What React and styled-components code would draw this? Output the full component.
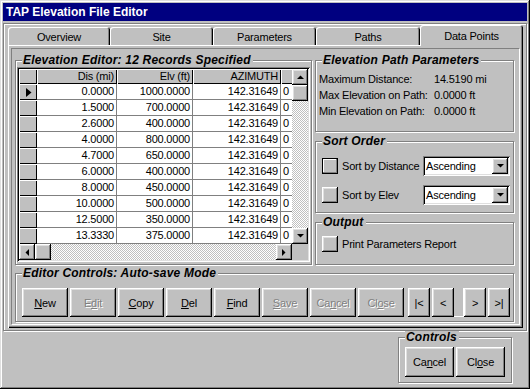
import React from 'react';
import styled, { createGlobalStyle, css } from 'styled-components';

const GlobalStyle = createGlobalStyle`
  html, body { margin: 0; padding: 0; background: #c0c0c0; }
  body {
    font-family: "Liberation Sans", Arial, sans-serif;
    font-size: 11px;
    letter-spacing: -0.2px;
    color: #000;
  }
  * { box-sizing: border-box; }
`;

const raised = css`
  box-shadow: inset -1px -1px #000, inset 1px 1px #fff, inset -2px -2px #808080, inset 2px 2px #dfdfdf;
`;
const sunken = css`
  box-shadow: inset 1px 1px #808080, inset -1px -1px #fff, inset 2px 2px #000, inset -2px -2px #dfdfdf;
`;
const dither = css`
  background-image: repeating-conic-gradient(#c0c0c0 0% 25%, #fff 0% 50%);
  background-size: 2px 2px;
`;

const Window = styled.div`
  width: 530px;
  height: 389px;
  background: #c0c0c0;
  padding: 3px;
  display: flex;
  flex-direction: column;
  box-shadow: inset -1px -1px #000, inset 1px 1px #dfdfdf, inset -2px -2px #808080, inset 2px 2px #fff;
`;

const TitleBar = styled.div`
  height: 18px;
  background: #000080;
  color: #fff;
  font-weight: bold;
  font-size: 12px;
  letter-spacing: 0;
  line-height: 18px;
  padding-left: 3px;
`;

const Frame = styled.div`
  margin-top: 2px;
  height: 308px;
  border: 1px solid #808080;
  box-shadow: inset 1px 1px #fff, 1px 1px #fff;
  padding: 1px 3px 2px 4px;
  display: flex;
  flex-direction: column;
`;

const TabRow = styled.div`
  display: flex;
  height: 20px;
  align-items: flex-end;
  position: relative;
  z-index: 1;
`;

const Tab = styled.div`
  flex: ${(p) => p.$w} 0 0;
  height: ${(p) => (p.$active ? '21px' : '18px')};
  margin-bottom: ${(p) => (p.$active ? '-1px' : '0')};
  background: #c0c0c0;
  border-radius: 3px 3px 0 0;
  box-shadow: inset 1px 1px #fff, inset -1px 0 #000, inset -2px 0 #808080;
  display: flex;
  align-items: center;
  justify-content: center;
  padding-top: ${(p) => (p.$active ? '0' : '1px')};
`;

const Panel = styled.div`
  flex: 1;
  padding: 3px;
  box-shadow: inset 1px 1px #fff, inset -1px -1px #000, inset -2px -2px #808080;
  display: flex;
`;

const InnerBox = styled.div`
  flex: 1;
  border: 1px solid;
  border-color: #808080 #fff #fff #808080;
  padding: 5px 5px 2px 3px;
  display: grid;
  grid-template-columns: 297px 1fr;
  grid-template-rows: 211px auto;
  column-gap: 3px;
  row-gap: 2px;
`;

const Group = styled.fieldset`
  margin: 0;
  padding: 0;
  min-width: 0;
  border: 1px solid #808080;
  box-shadow: inset 1px 1px #fff, 1px 1px #fff;
  ${(p) => p.$h && `height: ${p.$h}px;`}
  ${(p) => p.$span && 'grid-column: 1 / -1;'}
`;

const Legend = styled.legend`
  margin-left: 6px;
  padding: 0 2px 0 1px;
  font-weight: bold;
  font-style: italic;
  font-size: 12px;
  letter-spacing: 0.2px;
  line-height: 12px;
  background: #c0c0c0;
`;

const GroupBody = styled.div`
  padding: ${(p) => p.$pad};
`;

const RightCol = styled.div`
  display: flex;
  flex-direction: column;
  gap: 3px;
`;

/* ---------- Data grid ---------- */
const DataGrid = styled.div`
  width: 293px;
  height: 195px;
  padding: 2px;
  ${sunken}
  display: grid;
  grid-template-columns: 273px 16px;
  grid-template-rows: 175px 16px;
`;

const Table = styled.div`
  overflow: hidden;
  background: #fff;
`;

const GridRow = styled.div`
  display: grid;
  grid-template-columns: 18px 80px 76px 88px 40px;
  height: ${(p) => (p.$head ? '15px' : '16px')};
`;

const HeadCell = styled.div`
  background: #c0c0c0;
  box-shadow: inset 1px 1px #fff, inset -1px -1px #000;
  text-align: right;
  padding-right: 3px;
  line-height: 15px;
  white-space: nowrap;
  overflow: hidden;
`;

const RowHead = styled.div`
  background: #c0c0c0;
  box-shadow: inset 1px 1px #fff, inset -1px -1px #000;
  display: flex;
  align-items: center;
  padding-left: 7px;
`;

const Cell = styled.div`
  border-right: 1px solid #808080;
  border-bottom: 1px solid #808080;
  text-align: ${(p) => (p.$left ? 'left' : 'right')};
  padding: ${(p) => (p.$left ? '0 0 0 2px' : '0 2px 0 0')};
  line-height: 15px;
  white-space: nowrap;
  overflow: hidden;
`;

const VScroll = styled.div`
  display: flex;
  flex-direction: column;
  ${dither}
`;

const HScroll = styled.div`
  display: flex;
  ${dither}
`;

const Track = styled.div`
  flex: 1;
`;

const SBtn = styled.div`
  width: 16px;
  height: 16px;
  flex: none;
  background: #c0c0c0;
  ${raised}
  display: flex;
  align-items: center;
  justify-content: center;
`;

const Corner = styled.div`
  background: #c0c0c0;
`;

/* ---------- Buttons ---------- */
const Btn = styled.button`
  width: ${(p) => p.$w}px;
  height: ${(p) => p.$h || 29}px;
  margin: 0;
  padding: 0;
  border: none;
  background: #c0c0c0;
  font: inherit;
  font-size: 11px;
  letter-spacing: -0.2px;
  color: ${(p) => (p.disabled ? '#808080' : '#000')};
  text-shadow: ${(p) => (p.disabled ? '1px 1px #fff' : 'none')};
  ${raised}
  flex: none;
`;

const BtnRow = styled.div`
  display: flex;
  gap: 2px;
`;

const NavGap = styled.div`
  width: 1px;
`;

const Slot = styled.div`
  width: 10px;
  height: 29px;
  flex: none;
  margin: 0 -2px;
  box-shadow: inset 0 -1px #fff, inset -1px 0 #fff;
`;

/* ---------- Right side ---------- */
const InfoRow = styled.div`
  display: grid;
  grid-template-columns: 115px 1fr;
  line-height: 16px;
  white-space: nowrap;
`;

const OptRow = styled.div`
  display: flex;
  align-items: center;
  height: 20px;
`;

const Toggle = styled.div`
  width: 16px;
  height: 16px;
  flex: none;
  background: #c0c0c0;
  ${(p) =>
    p.$focus
      ? 'box-shadow: inset 0 0 0 1px #000, inset -2px -2px #808080, inset 2px 2px #fff;'
      : 'box-shadow: inset -1px -1px #000, inset 1px 1px #fff, inset -2px -2px #808080, inset 2px 2px #dfdfdf;'}
`;

const OptLabel = styled.div`
  width: ${(p) => p.$w}px;
  padding-left: 4px;
  white-space: nowrap;
`;

const Combo = styled.div`
  width: 87px;
  height: 20px;
  padding: 2px;
  background: #fff;
  ${sunken}
  display: flex;
  align-items: center;
`;

const ComboText = styled.span`
  flex: 1;
  padding-left: 1px;
`;

const OptStack = styled.div`
  display: flex;
  flex-direction: column;
  gap: 9px;
`;

/* ---------- Bottom ---------- */
const Bottom = styled.div`
  flex: 1;
  display: flex;
  justify-content: flex-end;
  padding-right: 15px;
`;

const Arrow = ({ dir }) => {
  const pts = {
    up: '0,4 7,4 3.5,0.5',
    down: '0,0 7,0 3.5,3.5',
    left: '4,0 4,7 0.5,3.5',
    right: '0,0 0,7 3.5,3.5',
  }[dir];
  const vertical = dir === 'up' || dir === 'down';
  return (
    <svg width={vertical ? 7 : 4} height={vertical ? 4 : 7} viewBox={vertical ? '0 0 7 4' : '0 0 4 7'}>
      <polygon points={pts} fill="#000" />
    </svg>
  );
};

const RowPointer = () => (
  <svg width="6" height="9" viewBox="0 0 6 9">
    <polygon points="0,0 5.5,4.5 0,9" fill="#000" />
  </svg>
);

const rows = [
  ['0.0000', '1000.0000'],
  ['1.5000', '700.0000'],
  ['2.6000', '400.0000'],
  ['4.0000', '800.0000'],
  ['4.7000', '650.0000'],
  ['6.0000', '400.0000'],
  ['8.0000', '450.0000'],
  ['10.0000', '500.0000'],
  ['12.5000', '350.0000'],
  ['13.3330', '375.0000'],
];

const tabs = [
  ['Overview', 102],
  ['Site', 103],
  ['Parameters', 103],
  ['Paths', 104],
  ['Data Points', 103],
];

const Acc = ({ text, at }) => (
  <>
    {text.slice(0, at)}
    <u>{text[at]}</u>
    {text.slice(at + 1)}
  </>
);

export default function App() {
  return (
    <>
      <GlobalStyle />
      <Window>
        <TitleBar>TAP Elevation File Editor</TitleBar>
        <Frame>
          <TabRow>
            {tabs.map(([t, w]) => (
              <Tab key={t} $w={w} $active={t === 'Data Points'}>
                {t}
              </Tab>
            ))}
          </TabRow>
          <Panel>
            <InnerBox>
              <Group>
                <Legend>Elevation Editor: 12 Records Specified</Legend>
                <GroupBody $pad="1px 0 0 1px">
                  <DataGrid>
                    <Table>
                      <GridRow $head>
                        <HeadCell />
                        <HeadCell>Dis (mi)</HeadCell>
                        <HeadCell>Elv (ft)</HeadCell>
                        <HeadCell>AZIMUTH</HeadCell>
                        <HeadCell />
                      </GridRow>
                      {rows.map(([d, e], i) => (
                        <GridRow key={i}>
                          <RowHead>{i === 0 && <RowPointer />}</RowHead>
                          <Cell>{d}</Cell>
                          <Cell>{e}</Cell>
                          <Cell>142.31649</Cell>
                          <Cell $left>0</Cell>
                        </GridRow>
                      ))}
                    </Table>
                    <VScroll>
                      <SBtn>
                        <Arrow dir="up" />
                      </SBtn>
                      <SBtn />
                      <Track />
                      <SBtn>
                        <Arrow dir="down" />
                      </SBtn>
                    </VScroll>
                    <HScroll>
                      <SBtn>
                        <Arrow dir="left" />
                      </SBtn>
                      <SBtn />
                      <Track />
                      <SBtn>
                        <Arrow dir="right" />
                      </SBtn>
                    </HScroll>
                    <Corner />
                  </DataGrid>
                </GroupBody>
              </Group>

              <RightCol>
                <Group $h={78}>
                  <Legend>Elevation Path Parameters</Legend>
                  <GroupBody $pad="5px 0 0 3px">
                    <InfoRow>
                      <span>Maximum Distance:</span>
                      <span>14.5190 mi</span>
                    </InfoRow>
                    <InfoRow>
                      <span>Max Elevation on Path:</span>
                      <span>0.0000 ft</span>
                    </InfoRow>
                    <InfoRow>
                      <span>Min Elevation on Path:</span>
                      <span>0.0000 ft</span>
                    </InfoRow>
                  </GroupBody>
                </Group>
                <Group $h={78}>
                  <Legend>Sort Order</Legend>
                  <GroupBody $pad="9px 0 0 6px">
                    <OptStack>
                      <OptRow>
                        <Toggle $focus />
                        <OptLabel $w={85}>Sort by Distance</OptLabel>
                        <Combo>
                          <ComboText>Ascending</ComboText>
                          <SBtn>
                            <Arrow dir="down" />
                          </SBtn>
                        </Combo>
                      </OptRow>
                      <OptRow>
                        <Toggle />
                        <OptLabel $w={85}>Sort by Elev</OptLabel>
                        <Combo>
                          <ComboText>Ascending</ComboText>
                          <SBtn>
                            <Arrow dir="down" />
                          </SBtn>
                        </Combo>
                      </OptRow>
                    </OptStack>
                  </GroupBody>
                </Group>
                <Group $h={49}>
                  <Legend>Output</Legend>
                  <GroupBody $pad="6px 0 0 6px">
                    <OptRow>
                      <Toggle />
                      <OptLabel $w={160}>Print Parameters Report</OptLabel>
                    </OptRow>
                  </GroupBody>
                </Group>
              </RightCol>

              <Group $span>
                <Legend>Editor Controls: Auto-save Mode</Legend>
                <GroupBody $pad="9px 6px 4px 6px">
                  <BtnRow>
                    <Btn $w={46}><Acc text="New" at={0} /></Btn>
                    <Btn $w={46} disabled><Acc text="Edit" at={1} /></Btn>
                    <Btn $w={46}><Acc text="Copy" at={0} /></Btn>
                    <Btn $w={46}><Acc text="Del" at={0} /></Btn>
                    <Btn $w={46}><Acc text="Find" at={0} /></Btn>
                    <Btn $w={46} disabled><Acc text="Save" at={0} /></Btn>
                    <Btn $w={46} disabled><Acc text="Cancel" at={2} /></Btn>
                    <Btn $w={46} disabled><Acc text="Close" at={2} /></Btn>
                    <NavGap />
                    <Btn $w={22}>|&lt;</Btn>
                    <Btn $w={22}>&lt;</Btn>
                    <Slot />
                    <Btn $w={22}>&gt;</Btn>
                    <Btn $w={22}>&gt;|</Btn>
                  </BtnRow>
                </GroupBody>
              </Group>
            </InnerBox>
          </Panel>
        </Frame>
        <Bottom>
          <Group $h={52}>
            <Legend>Controls</Legend>
            <GroupBody $pad="4px 6px 0 6px">
              <BtnRow>
                <Btn $w={49} $h={30}><Acc text="Cancel" at={2} /></Btn>
                <Btn $w={49} $h={30}><Acc text="Close" at={2} /></Btn>
              </BtnRow>
            </GroupBody>
          </Group>
        </Bottom>
      </Window>
    </>
  );
}
